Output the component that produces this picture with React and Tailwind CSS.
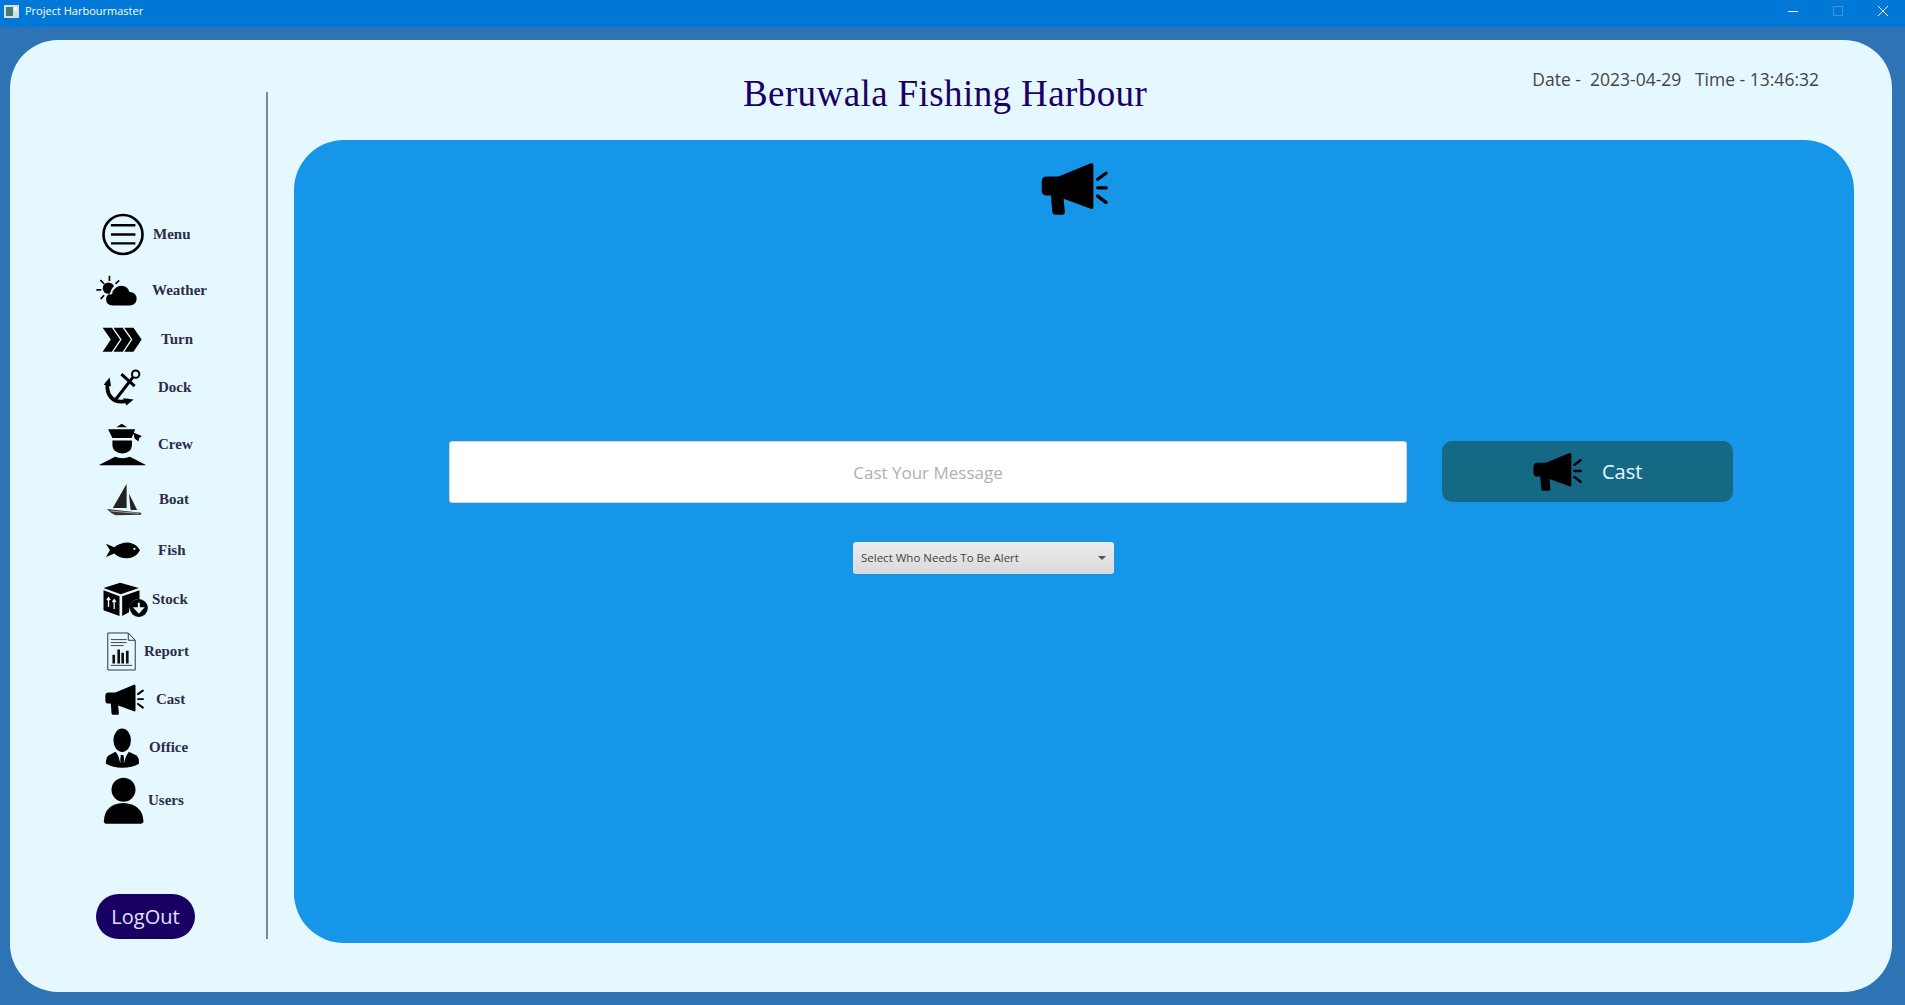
import { useState } from 'react';

const Megaphone = ({ className }) => (
    <svg viewBox="122 64 202 160" className={className}>
        <path d="M140 108H175L272 68Q280 66 280 74V200Q280 208 272 205L190 175L194 216Q194 223 187 223H164Q157 223 156 216L152 165H140Q124 165 124 150V124Q124 108 140 108Z" fill="#000" />
        <path d="M293 116L318 98M293 142H319M293 167L318 186" stroke="#000" strokeWidth="10" strokeLinecap="round" fill="none" />
    </svg>
);

const MenuIcon = ({ className }) => (
    <svg viewBox="65 40 127 128" className={className}>
        <circle cx="128.500" cy="104" r="59" fill="none" stroke="#000" strokeWidth="8" />
        <path d="M92 76H166M92 104H166M92 131H166" stroke="#000" strokeWidth="7" fill="none" />
    </svg>
);

const WeatherIcon = ({ className }) => (
    <svg viewBox="48 218 122 92" className={className}>
        <circle cx="85" cy="257" r="17" fill="#000" />
        <path d="M88 220V236M61 233L72 244M49 262H64M62 289L72 278M117 234L106 244" stroke="#000" strokeWidth="5" fill="none" />
        <path d="M98 309Q78 307 78 290Q78 274 97 272Q104 250 124 250Q143 251 147 268Q168 270 169 288Q169 307 150 309Z" fill="#000" />
        <path d="M91 276Q98 248 124 246" stroke="#e6f8ff" strokeWidth="5" fill="none" />
    </svg>
);

const TurnIcon = ({ className }) => (
    <svg viewBox="65 378 122 76" className={className}>
        <path d="M67 380H95L120 416L95 453H67L92 416Z M100 380H128L153 416L128 453H100L125 416Z M133 380H161L186 416L161 453H133L158 416Z" fill="#000" />
    </svg>
);

const AnchorIcon = ({ className }) => (
    <svg viewBox="70 505 120 110" className={className}>
        <circle cx="168" cy="520" r="11" fill="none" stroke="#000" strokeWidth="6" />
        <path d="M160 529L108 596M125 520L165 556" stroke="#000" strokeWidth="9" fill="none" />
        <path d="M84 545Q78 585 108 600Q125 606 148 598" stroke="#000" strokeWidth="11" fill="none" />
        <path d="M72 552L90 530L94 556Z M130 592L162 596L140 614Z" fill="#000" />
    </svg>
);

const CrewIcon = ({ className }) => (
    <svg viewBox="55 35 145 130" className={className}>
        <path d="M125 37L142 48H109Z M84 54H166L155 80H97Z M160 64L186 74L178 80L176 91L164 82Z" fill="#000" />
        <path d="M97 88H156V104Q154 125 127 127Q99 125 97 104Z" fill="#000" />
        <path d="M58 161L105 137Q127 146 150 137L197 161Q198 163 195 163H60Q57 163 58 161Z" fill="#000" />
    </svg>
);

const BoatIcon = ({ className }) => (
    <svg viewBox="78 218 108 100" className={className}>
        <path d="M140 220V294H98Z" fill="#222" />
        <path d="M147 250L172 300H152Z" fill="#222" />
        <path d="M80 297L184 308V314L106 316Q92 310 80 297Z" fill="#333" />
        <path d="M92 303L176 310" stroke="#ddd" strokeWidth="2" fill="none" />
    </svg>
);

const FishIcon = ({ className }) => (
    <svg viewBox="76 392 108 52" className={className}>
        <path d="M78 397L103 408Q125 392 150 394Q172 398 182 417Q170 440 142 442Q120 442 103 427L78 438L90 417Z" fill="#000" />
        <circle cx="165" cy="413" r="3.500" fill="#e6f8ff" />
    </svg>
);

const StockIcon = ({ className }) => (
    <svg viewBox="66 515 140 105" className={className}>
        <path d="M120 517L176 533L122 552L70 533Z" fill="#000" />
        <path d="M70 540L118 558V617L70 600Z" fill="#000" />
        <path d="M126 558L178 540V566Q150 566 146 606L126 617Z" fill="#000" />
        <path d="M85 590V563M80 569L85 562L90 569M102 596V569M97 575L102 568L107 575" stroke="#e6f8ff" strokeWidth="4" fill="none" />
        <circle cx="176" cy="593" r="27" fill="#000" />
        <path d="M176 577V598M165 594L176 606L187 594Z" stroke="#e6f8ff" strokeWidth="6" fill="#e6f8ff" />
    </svg>
);

const ReportIcon = ({ className }) => (
    <svg viewBox="80 35 90 118" className={className}>
        <path d="M82 38H144L165 60V150H82Z" fill="#e6f8ff" stroke="#333" strokeWidth="3" />
        <path d="M144 38V60H165" fill="none" stroke="#333" strokeWidth="3" />
        <path d="M91 58H139M91 67H139M91 76H130" stroke="#444" strokeWidth="3" fill="none" />
        <path d="M100 130V104M115 130V88M127 130V98M141 130V92" stroke="#111" strokeWidth="8" fill="none" />
        <path d="M91 136H156" stroke="#444" strokeWidth="3" fill="none" />
    </svg>
);

const OfficeIcon = ({ className }) => (
    <svg viewBox="75 322 104 118" className={className}>
        <ellipse cx="126" cy="358" rx="26" ry="35" fill="#000" />
        <path d="M106 392L84 404Q76 412 78 428Q98 440 126 440Q156 440 176 428Q177 412 170 404L146 392L128 420Z" fill="#000" />
        <path d="M112 396L126 402L140 396L132 424L126 420L120 424Z" fill="#e6f8ff" />
        <path d="M122 402H130L132 420L126 424L120 420Z" fill="#000" />
    </svg>
);

const UserIcon = ({ className }) => (
    <svg viewBox="70 467 122 141" className={className}>
        <circle cx="131" cy="505" r="36" fill="#000" />
        <path d="M72 600Q74 548 130 545Q188 548 191 600Q190 607 184 607H78Q72 607 72 600Z" fill="#000" />
    </svg>
);

const menuItems = [
    { name: 'Menu', icon: <MenuIcon className="w-[42px] h-[43px] shrink-0" />, row: 'pl-[92px]', label: 'ml-[9px]' },
    { name: 'Weather', icon: <WeatherIcon className="w-[41px] h-[31px] shrink-0" />, row: 'pl-[86px] mt-[19px]', label: 'ml-[15px]' },
    { name: 'Turn', icon: <TurnIcon className="w-[40px] h-[25px] shrink-0" />, row: 'pl-[92px] mt-[21px]', label: 'ml-[19px]' },
    { name: 'Dock', icon: <AnchorIcon className="w-[40px] h-[37px] shrink-0" />, row: 'pl-[93px] mt-[17px]', label: 'ml-[15px]' },
    { name: 'Crew', icon: <CrewIcon className="w-[49px] h-[43px] shrink-0" />, row: 'pl-[88px] mt-[17px]', label: 'ml-[11px]' },
    { name: 'Boat', icon: <BoatIcon className="w-[36px] h-[33px] shrink-0" />, row: 'pl-[96px] mt-[17px]', label: 'ml-[17px]' },
    { name: 'Fish', icon: <FishIcon className="w-[36px] h-[17px] shrink-0" />, row: 'pl-[95px] mt-[23px]', label: 'ml-[17px]' },
    { name: 'Stock', icon: <StockIcon className="w-[47px] h-[35px] shrink-0" />, row: 'pl-[92px] mt-[20px]', label: 'ml-[3px]' },
    { name: 'Report', icon: <ReportIcon className="w-[30px] h-[39px] shrink-0" />, row: 'pl-[97px] mt-[15px]', label: 'ml-[7px]' },
    { name: 'Cast', icon: <Megaphone className="w-[39px] h-[31px] shrink-0" />, row: 'pl-[95px] mt-[13px]', label: 'ml-[12px]' },
    { name: 'Office', icon: <OfficeIcon className="w-[35px] h-[40px] shrink-0" />, row: 'pl-[95px] mt-[13px]', label: 'ml-[9px]' },
    { name: 'Users', icon: <UserIcon className="w-[41px] h-[47px] shrink-0" />, row: 'pl-[93px] mt-[9px]', label: 'ml-[4px]' },
];

const TitleBar = () => (
    <div className="h-[27px] pb-[5px] bg-[#0078d7] flex items-center text-white shrink-0">
        <svg viewBox="0 0 15 13" className="ml-[4px] w-[15px] h-[13px]">
            <rect width="15" height="13" fill="#d8dde2" />
            <rect x="2" y="2" width="7" height="9" fill="#3f7f72" />
            <rect x="10" y="2" width="3" height="4" fill="#f2f4f6" />
        </svg>
        <span className="ml-[6px] text-[11px] font-['Open_Sans',sans-serif]">Project Harbourmaster</span>
        <div className="ml-auto flex items-center">
            <svg viewBox="0 0 10 10" className="w-[10px] h-[10px]">
                <path d="M0 5.500H10" stroke="#fff" strokeWidth="1" />
            </svg>
            <svg viewBox="0 0 10 10" className="ml-[35px] w-[10px] h-[10px]">
                <rect x="0.500" y="0.500" width="9" height="9" fill="none" stroke="#3d93dc" strokeWidth="1" />
            </svg>
            <svg viewBox="0 0 10 10" className="ml-[35px] mr-[17px] w-[10px] h-[10px]">
                <path d="M0 0L10 10M10 0L0 10" stroke="#fff" strokeWidth="1" />
            </svg>
        </div>
    </div>
);

const Sidebar = () => (
    <aside className="w-[258px] h-[847px] mt-[52px] shrink-0 border-r-2 border-[#7b8b8f] flex flex-col pt-[121px]">
        {menuItems.map((item) => (
            <div key={item.name} className={`flex items-center ${item.row}`}>
                {item.icon}
                <span className={`${item.label} text-[15px] font-bold text-[#2c2c48] font-['Liberation_Serif',serif]`}>
                    {item.name}
                </span>
            </div>
        ))}
        <button className="mt-auto ml-[86px] w-[99px] h-[45px] rounded-[23px] bg-[#180062] text-[#e4e0ff] text-[20px] font-['Open_Sans',sans-serif]">
            LogOut
        </button>
    </aside>
);

const App = () => {
    const [message, setMessage] = useState('');

    return (
        <div className="w-[1905px] h-[1005px] bg-[#2e73b4] flex flex-col overflow-hidden">
            <TitleBar />
            <div className="px-[10px] pt-[13px] pr-[13px]">
                <div className="h-[952px] bg-[#e6f8ff] rounded-[48px] flex">
                    <Sidebar />
                    <div className="flex-1 ml-[26px] mr-[38px]">
                        <header className="h-[100px] flex justify-between">
                            <h1 className="ml-[449px] mt-[31px] text-[37px] leading-[46px] tracking-[0.4px] text-[#1a0066] font-['Liberation_Serif',serif]">
                                Beruwala Fishing Harbour
                            </h1>
                            <div className="mt-[26px] mr-[35px] text-[17.500px] leading-[26px] text-[#444] font-['Open_Sans',sans-serif] whitespace-pre">
                                Date -  2023-04-29   Time - 13:46:32
                            </div>
                        </header>
                        <main className="h-[803px] bg-[#1696e8] rounded-[50px] pt-[22px] flex flex-col">
                            <Megaphone className="self-center w-[67px] h-[53px]" />
                            <div className="mt-[226px] ml-[155px] flex gap-[35px]">
                                <input
                                    value={message}
                                    onChange={(e) => setMessage(e.target.value)}
                                    placeholder="Cast Your Message"
                                    className="w-[958px] h-[62px] bg-white border border-[#d8d8d8] rounded-[3px] text-center text-[17px] placeholder:text-[#b0b0b0] outline-none font-['Open_Sans',sans-serif]"
                                />
                                <button className="w-[291px] h-[61px] bg-[#166985] rounded-[10px] flex items-center text-[20px] text-[#e6f8ff] font-['Open_Sans',sans-serif]">
                                    <Megaphone className="ml-[91px] w-[49px] h-[39px]" />
                                    <span className="ml-[20px]">Cast</span>
                                </button>
                            </div>
                            <div className="mt-[39px] ml-[559px] w-[261px] h-[32px] rounded-[3px] bg-gradient-to-b from-[#ededed] to-[#d9d9d9] flex items-center justify-between pl-[8px] pr-[8px] text-[11.500px] text-[#444] font-['Open_Sans',sans-serif]">
                                <span>Select Who Needs To Be Alert</span>
                                <span className="w-0 h-0 border-x-[4px] border-x-transparent border-t-[4px] border-t-[#555]" />
                            </div>
                        </main>
                    </div>
                </div>
            </div>
        </div>
    );
};

export default App;
